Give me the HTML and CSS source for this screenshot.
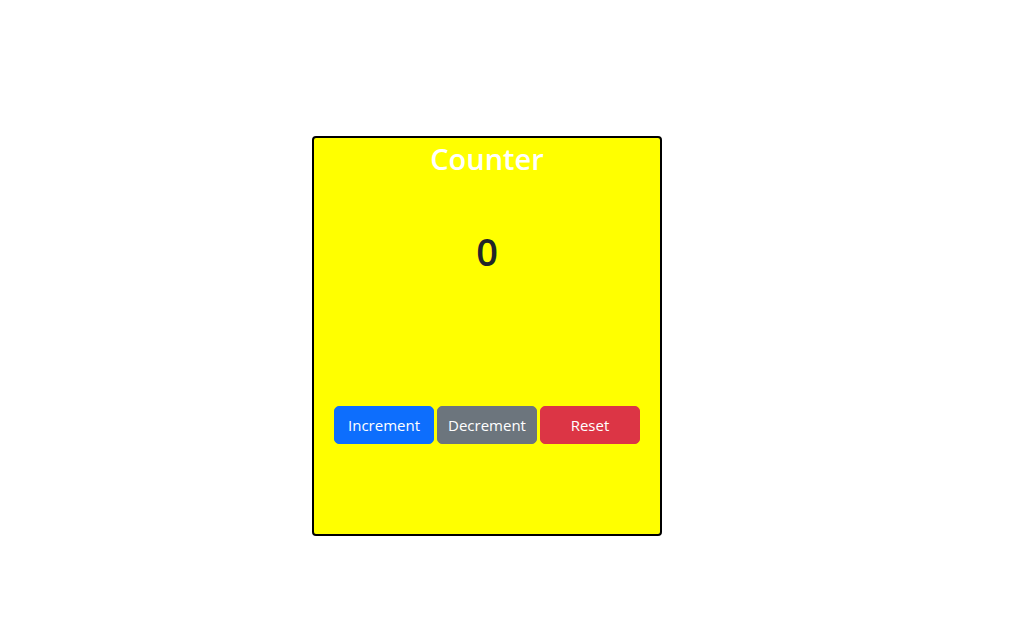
FILE: index.html
```html
<!DOCTYPE html>
<html lang="en">
<head>
<meta charset="utf-8">
<title>Counter</title>
<link rel="stylesheet" href="styles.css">
</head>
<body>
<main class="page">
  <section class="card">
    <h2 class="title">Counter</h2>
    <h1 class="count">0</h1>
    <div class="actions">
      <button class="btn btn-primary" type="button">Increment</button>
      <button class="btn btn-secondary" type="button">Decrement</button>
      <button class="btn btn-danger" type="button">Reset</button>
    </div>
  </section>
</main>
</body>
</html>
```
FILE: styles.css
```css
* { box-sizing: border-box; }
html, body { margin: 0; padding: 0; background: #fff; }
body {
  font-family: "Open Sans", "Noto Sans", sans-serif;
  color: #212529;
}
.page {
  padding: 136px 0 0 312px;
}
.card {
  width: 350px;
  height: 400px;
  background: #ffff00;
  border: 2px solid #000;
  border-radius: 4px;
  display: flex;
  flex-direction: column;
  align-items: center;
}
.title {
  margin: 2px 0 0;
  font-size: 29px;
  line-height: 38px;
  font-weight: 600;
  color: #fff;
}
.count {
  margin: 49px 0 0;
  font-size: 38px;
  line-height: 48px;
  font-weight: 600;
  color: #212529;
}
.actions {
  margin-top: 131px;
  display: flex;
  gap: 3px;
}
.btn {
  width: 100px;
  height: 38px;
  padding: 6px 8px;
  border: 1px solid transparent;
  border-radius: 5px;
  font-family: inherit;
  font-size: 15px;
  line-height: 24px;
  color: #fff;
  cursor: pointer;
}
.btn-primary { background: #0d6efd; border-color: #0d6efd; }
.btn-secondary { background: #6c757d; border-color: #6c757d; }
.btn-danger { background: #dc3545; border-color: #dc3545; }
```
